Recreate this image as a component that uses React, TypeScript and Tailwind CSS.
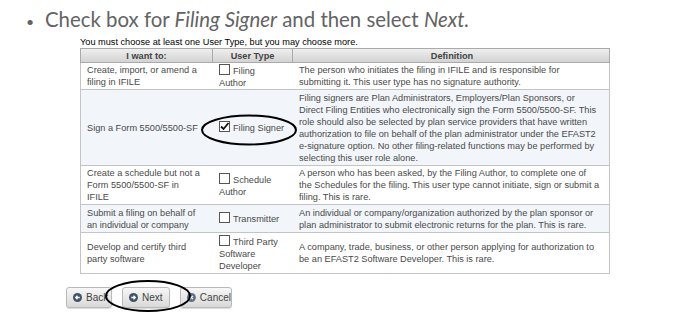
import { ReactNode } from 'react';

interface RowProps {
  want: ReactNode;
  type: ReactNode;
  def: ReactNode;
  checked?: boolean;
  shaded?: boolean;
  h: string;
}

const Box = ({ checked }: { checked?: boolean }) => (
  <span className="inline-block align-[-1px] w-[11px] h-[11px] mr-[3px] border border-[#555] bg-white relative">
    {checked && (
      <svg viewBox="0 0 11 11" className="absolute -left-px -top-px w-[11px] h-[11px]">
        <path d="M2 5.5 L4.5 8 L9.5 2" fill="none" stroke="#111" strokeWidth="1.8" />
      </svg>
    )}
  </span>
);

const Row = ({ want, type, def, checked, shaded, h }: RowProps) => (
  <div className={`grid grid-cols-[132px_80px_318px] border-b border-[#c4c4c4] ${shaded ? 'bg-[#f2f5f9]' : 'bg-white'} ${h}`}>
    <div className="flex items-center pl-[6px]">{want}</div>
    <div className="flex items-center pl-[6px] whitespace-nowrap">
      <div>
        <Box checked={checked} />
        {type}
      </div>
    </div>
    <div className="flex items-center pl-[6px] whitespace-nowrap">
      <div>{def}</div>
    </div>
  </div>
);

const Btn = ({ label, icon, w }: { label: string; icon: 'back' | 'next' | 'cancel'; w: string }) => (
  <div className={`${w} h-[21px] flex items-center gap-[4px] pl-[6px] rounded-[3px] border border-[#b9b9b9] bg-gradient-to-b from-[#f7f7f7] to-[#d9d9d9] shadow-[0_1px_1px_rgba(0,0,0,0.15)] text-[10px] text-[#444]`}>
    <svg viewBox="0 0 10 10" className="w-[9px] h-[9px]">
      <circle cx="5" cy="5" r="5" fill={icon === 'cancel' ? '#5b6f86' : '#3f536b'} />
      {icon === 'back' && <path d="M7.5 5 H3 M5 3 L3 5 L5 7" stroke="#fff" strokeWidth="1.4" fill="none" />}
      {icon === 'next' && <path d="M2.5 5 H7 M5 3 L7 5 L5 7" stroke="#fff" strokeWidth="1.4" fill="none" />}
      {icon === 'cancel' && <path d="M3.2 3.2 L6.8 6.8 M6.8 3.2 L3.2 6.8" stroke="#fff" strokeWidth="1.4" fill="none" />}
    </svg>
    <span>{label}</span>
  </div>
);

const App = () => {
  return (
    <div className="relative w-[675px] h-[314px] overflow-hidden bg-white font-['Liberation_Sans',Arial,sans-serif]">
      {/* Slide bullet */}
      <div className="flex items-baseline pl-[26px] pt-[7px] h-[37px] text-[20.4px] leading-[24px] text-[#636363] font-['Lato',sans-serif]">
        <span className="w-[19px] text-[14px]">•</span>
        <span>
          Check box for <i>Filing Signer</i> and then select <i>Next.</i>
        </span>
      </div>

      <div className="ml-[80px] w-[530px]">
        <p className="text-[9.2px] leading-[11px] text-black">You must choose at least one User Type, but you may choose more.</p>
        <div className="text-[9.2px] leading-[12px] text-[#4a4a4a] border-x border-[#c4c4c4]">
          <div className="grid grid-cols-[132px_80px_318px] h-[15px] border border-[#aaa] -mx-px bg-gradient-to-b from-[#efefef] to-[#d3d3d3] font-bold text-[#444] text-center">
            <div className="flex items-center justify-center border-r border-[#aaa]">I want to:</div>
            <div className="flex items-center justify-center border-r border-[#aaa]">User Type</div>
            <div className="flex items-center justify-center">Definition</div>
          </div>
          <Row
            h="h-[27px]"
            want={<>Create, import, or amend a<br />filing in IFILE</>}
            type={<>Filing<br />Author</>}
            def={<>The person who initiates the filing in IFILE and is responsible for<br />submitting it. This user type has no signature authority.</>}
          />
          <Row
            h="h-[76px]"
            shaded
            checked
            want={<>Sign a Form 5500/5500-SF</>}
            type={<>Filing Signer</>}
            def={<>Filing signers are Plan Administrators, Employers/Plan Sponsors, or<br />Direct Filing Entities who electronically sign the Form 5500/5500-SF. This<br />role should also be selected by plan service providers that have written<br />authorization to file on behalf of the plan administrator under the EFAST2<br />e-signature option. No other filing-related functions may be performed by<br />selecting this user role alone.</>}
          />
          <Row
            h="h-[39px]"
            want={<>Create a schedule but not a<br />Form 5500/5500-SF in<br />IFILE</>}
            type={<>Schedule<br />Author</>}
            def={<>A person who has been asked, by the Filing Author, to complete one of<br />the Schedules for the filing. This user type cannot initiate, sign or submit a<br />filing. This is rare.</>}
          />
          <Row
            h="h-[28px]"
            shaded
            want={<>Submit a filing on behalf of<br />an individual or company</>}
            type={<>Transmitter</>}
            def={<>An individual or company/organization authorized by the plan sponsor or<br />plan administrator to submit electronic returns for the plan. This is rare.</>}
          />
          <Row
            h="h-[41px]"
            want={<>Develop and certify third<br />party software</>}
            type={<>Third Party<br />Software<br />Developer</>}
            def={<>A company, trade, business, or other person applying for authorization to<br />be an EFAST2 Software Developer. This is rare.</>}
          />
        </div>
      </div>

      <div className="flex gap-[10px] ml-[66px] mt-[13px]">
        <Btn label="Back" icon="back" w="w-[46px]" />
        <Btn label="Next" icon="next" w="w-[48px]" />
        <Btn label="Cancel" icon="cancel" w="w-[52px]" />
      </div>

      {/* hand-drawn annotation circles */}
      <svg className="absolute left-0 top-0 w-[675px] h-[314px] pointer-events-none" viewBox="0 0 675 314">
        <ellipse cx="249" cy="130" rx="47" ry="14.5" fill="none" stroke="#000" strokeWidth="2" />
        <ellipse cx="148" cy="296" rx="42" ry="15" fill="none" stroke="#000" strokeWidth="2" />
      </svg>
    </div>
  );
};

export default App;
